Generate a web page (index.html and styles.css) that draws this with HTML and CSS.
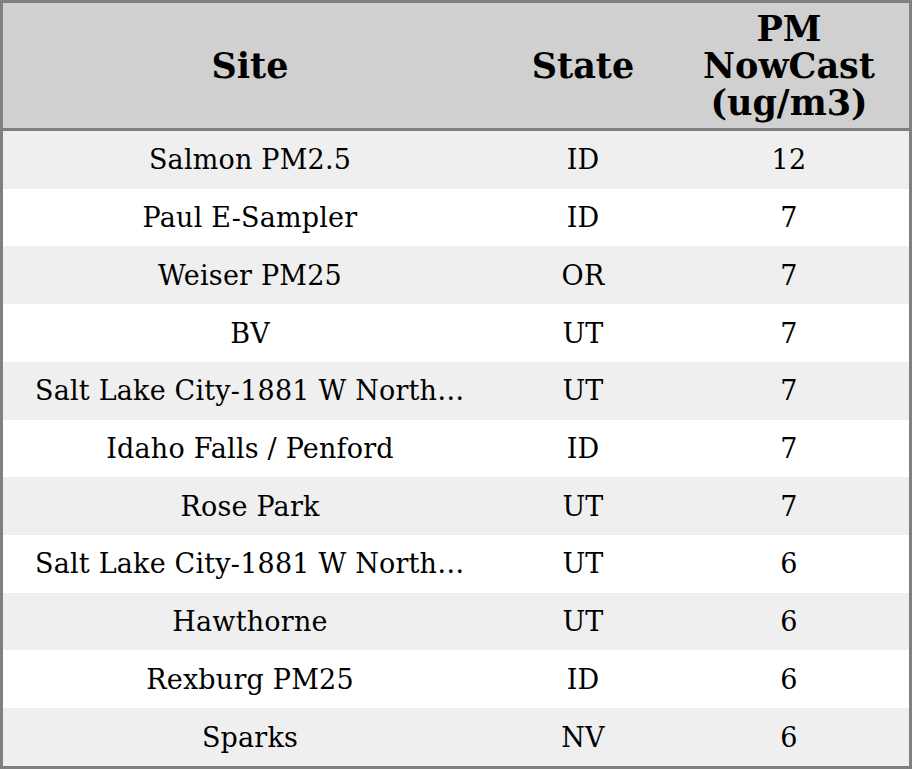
FILE: index.html
```html
<!DOCTYPE html>
<html>
<head>
<meta charset="utf-8">
<link rel="stylesheet" href="styles.css">
</head>
<body>
<table class="grid">
  <colgroup>
    <col class="c-site">
    <col class="c-state">
    <col class="c-pm">
  </colgroup>
  <thead>
    <tr class="head-row"><th>Site</th><th>State</th><th>PM NowCast (ug/m3)</th></tr>
  </thead>
  <tbody>
    <tr><td>Salmon PM2.5</td><td>ID</td><td>12</td></tr>
    <tr><td>Paul E-Sampler</td><td>ID</td><td>7</td></tr>
    <tr><td>Weiser PM25</td><td>OR</td><td>7</td></tr>
    <tr><td>BV</td><td>UT</td><td>7</td></tr>
    <tr><td>Salt Lake City-1881 W Northtemple</td><td>UT</td><td>7</td></tr>
    <tr><td>Idaho Falls / Penford</td><td>ID</td><td>7</td></tr>
    <tr><td>Rose Park</td><td>UT</td><td>7</td></tr>
    <tr><td>Salt Lake City-1881 W Northtemple</td><td>UT</td><td>6</td></tr>
    <tr><td>Hawthorne</td><td>UT</td><td>6</td></tr>
    <tr><td>Rexburg PM25</td><td>ID</td><td>6</td></tr>
    <tr><td>Sparks</td><td>NV</td><td>6</td></tr>
  </tbody>
</table>
</body>
</html>
```
FILE: styles.css
```css
html, body {
  margin: 0;
  padding: 0;
  background: #ffffff;
}
.grid {
  width: 912px;
  height: 769px;
  table-layout: fixed;
  border-collapse: separate;
  border-spacing: 0;
  border: 3px solid #808080;
  font-family: "DejaVu Serif", serif;
  color: #000;
}
.c-site { width: 494px; }
.c-state { width: 172px; }
.c-pm { width: 240px; }
.grid th {
  background: #d0d0d0;
  font-weight: bold;
  font-size: 35px;
  line-height: 37px;
  height: 125px;
  padding: 0 32px;
  text-align: center;
  vertical-align: middle;
  border-bottom: 3px solid #808080;
}
.grid td {
  font-size: 27px;
  letter-spacing: 0.2px;
  height: 57.727px;
  padding: 0 32px;
  text-align: center;
  vertical-align: middle;
  white-space: nowrap;
  overflow: hidden;
  text-overflow: ellipsis;
}
.grid tbody tr:nth-child(odd) td {
  background: #efefef;
}
.grid tbody tr:nth-child(even) td {
  background: #ffffff;
}
```
